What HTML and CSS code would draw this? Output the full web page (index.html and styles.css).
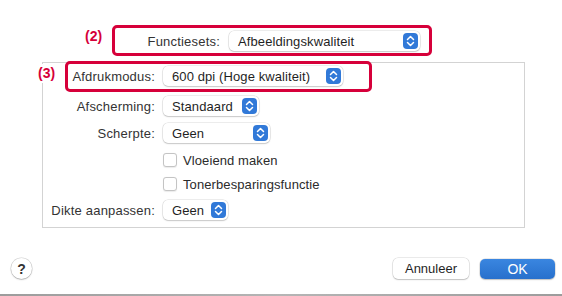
FILE: index.html
```html
<!DOCTYPE html>
<html lang="nl">
<head>
  <meta charset="UTF-8" />
  <title>Afdrukinstellingen</title>
  <link rel="stylesheet" href="styles.css">
</head>
<body>

  <div class="sheet">
    <div class="top">
      <div class="callout callout-two">
        <span class="mark mark-two">(2)</span>
        <span class="label top-label">Functiesets:</span>
        <div class="popup w-sets">
          <span>Afbeeldingskwaliteit</span>
          <svg class="stepper" viewBox="0 0 15 16"><rect width="15" height="16" rx="4"/><path d="M4.5 6.5 L7.5 3.5 L10.5 6.5 M4.5 9.5 L7.5 12.5 L10.5 9.5"/></svg>
        </div>
      </div>
    </div>

    <div class="panel">
      <div class="row row-mode callout callout-three">
        <span class="mark mark-three">(3)</span>
        <span class="label">Afdrukmodus:</span>
        <div class="popup w-mode">
          <span>600 dpi (Hoge kwaliteit)</span>
          <svg class="stepper" viewBox="0 0 15 16"><rect width="15" height="16" rx="4"/><path d="M4.5 6.5 L7.5 3.5 L10.5 6.5 M4.5 9.5 L7.5 12.5 L10.5 9.5"/></svg>
        </div>
      </div>

      <div class="row row-screen">
        <span class="label">Afscherming:</span>
        <div class="popup w-screen">
          <span>Standaard</span>
          <svg class="stepper" viewBox="0 0 15 16"><rect width="15" height="16" rx="4"/><path d="M4.5 6.5 L7.5 3.5 L10.5 6.5 M4.5 9.5 L7.5 12.5 L10.5 9.5"/></svg>
        </div>
      </div>

      <div class="row row-sharp">
        <span class="label">Scherpte:</span>
        <div class="popup w-sharp">
          <span>Geen</span>
          <svg class="stepper" viewBox="0 0 15 16"><rect width="15" height="16" rx="4"/><path d="M4.5 6.5 L7.5 3.5 L10.5 6.5 M4.5 9.5 L7.5 12.5 L10.5 9.5"/></svg>
        </div>
      </div>

      <label class="row row-check1">
        <span class="label"></span>
        <span class="checkbox"></span>
        <span class="check-text">Vloeiend maken</span>
      </label>

      <label class="row row-check2">
        <span class="label"></span>
        <span class="checkbox"></span>
        <span class="check-text">Tonerbesparingsfunctie</span>
      </label>

      <div class="row row-thick">
        <span class="label">Dikte aanpassen:</span>
        <div class="popup w-thick">
          <span>Geen</span>
          <svg class="stepper" viewBox="0 0 15 16"><rect width="15" height="16" rx="4"/><path d="M4.5 6.5 L7.5 3.5 L10.5 6.5 M4.5 9.5 L7.5 12.5 L10.5 9.5"/></svg>
        </div>
      </div>
    </div>

    <div class="footer">
      <button class="help">?</button>
      <div class="actions">
        <button class="btn">Annuleer</button>
        <button class="btn btn-ok">OK</button>
      </div>
    </div>
  </div>

  <div class="edge"></div>

</body>
</html>
```

FILE: styles.css
```css
body {
  margin: 0;
  width: 562px;
  height: 296px;
  overflow: hidden;
  background: #ffffff;
  font-family: "Liberation Sans", Arial, sans-serif;
  font-size: 13px;
  color: #2b2b2b;
}

.sheet {
  height: 294px;
  padding-top: 31px;
  box-sizing: border-box;
}

/* top row: Functiesets */
.top {
  display: flex;
  padding-left: 120px;
}

.callout {
  position: relative;
}

.callout::before {
  content: "";
  position: absolute;
  border: 3px solid #d6003a;
  border-radius: 5px;
  pointer-events: none;
}

.callout-two {
  display: flex;
  align-items: center;
  height: 20px;
}

.callout-two::before {
  top: -6px;
  bottom: -5px;
  left: -8px;
  right: -12px;
}

.callout-three::before {
  top: -5px;
  bottom: -6px;
  left: 22px;
  right: -29px;
}

.mark {
  position: absolute;
  font-weight: bold;
  font-size: 14px;
  line-height: 16px;
  color: #d6003a;
  background: #ffffff;
}

.mark-two {
  left: -35px;
  top: -3px;
}

.mark-three {
  left: -5px;
  top: -2px;
  padding: 1px 0 2px;
}

.top-label {
  width: 100px;
  margin-right: 9px;
}

.label {
  text-align: right;
  color: #333333;
  white-space: nowrap;
  letter-spacing: 0.2px;
}

/* settings panel */
.panel {
  margin: 11px 0 0 42px;
  width: 481px;
  height: 161px;
  border: 1px solid #d3d3d3;
  padding-top: 3px;
  box-sizing: content-box;
  display: flex;
  flex-direction: column;
  align-items: flex-start;
}

.panel .label {
  width: 112px;
  margin-right: 8px;
}

.row {
  display: flex;
  align-items: center;
  height: 20px;
}

.row-screen { margin-top: 10px; }
.row-sharp { margin-top: 7px; }
.row-check1 { margin-top: 7px; }
.row-check2 { margin-top: 4px; }
.row-thick { margin-top: 6px; }

/* popup buttons */
.popup {
  display: flex;
  align-items: center;
  justify-content: space-between;
  height: 20px;
  padding: 0 2px 0 9px;
  box-sizing: border-box;
  background: #ffffff;
  border-radius: 5px;
  box-shadow: 0 0 0 0.5px rgba(0, 0, 0, 0.14), 0 1px 1.5px rgba(0, 0, 0, 0.16);
  color: #1f1f1f;
  white-space: nowrap;
  letter-spacing: 0.1px;
}

.w-sets { width: 191px; }
.w-mode { width: 180px; }
.w-screen { width: 96px; }
.w-sharp { width: 107px; }
.w-thick { width: 65px; }

.stepper {
  width: 15px;
  height: 16px;
  flex: none;
}

.stepper rect {
  fill: #3179d8;
}

.stepper path {
  fill: none;
  stroke: #ffffff;
  stroke-width: 1.5;
  stroke-linecap: round;
  stroke-linejoin: round;
}

/* checkboxes */
.checkbox {
  width: 14px;
  height: 14px;
  box-sizing: border-box;
  border: 1px solid #c4c4c4;
  border-radius: 3px;
  background: #ffffff;
  box-shadow: 0 0.5px 1px rgba(0, 0, 0, 0.08);
  margin-right: 6px;
}

.check-text {
  color: #2b2b2b;
  letter-spacing: 0.1px;
}

/* footer */
.footer {
  display: flex;
  justify-content: space-between;
  align-items: center;
  margin-top: 30px;
  padding: 0 7px 0 11px;
}

.help {
  width: 21px;
  height: 21px;
  border-radius: 50%;
  border: none;
  padding: 0;
  background: #ffffff;
  box-shadow: 0 0 0 0.5px rgba(0, 0, 0, 0.18), 0 1px 1.5px rgba(0, 0, 0, 0.2);
  font-family: "Liberation Sans", Arial, sans-serif;
  font-size: 14px;
  font-weight: bold;
  color: #333333;
}

.actions {
  display: flex;
  align-items: center;
  gap: 11px;
}

.btn {
  width: 76px;
  height: 21px;
  border: none;
  border-radius: 5px;
  padding: 0;
  background: #ffffff;
  box-shadow: 0 0 0 0.5px rgba(0, 0, 0, 0.16), 0 1px 1.5px rgba(0, 0, 0, 0.18);
  font-family: "Liberation Sans", Arial, sans-serif;
  font-size: 13px;
  color: #1f1f1f;
}

.btn-ok {
  width: 75px;
  height: 20px;
  background: linear-gradient(#3a86e0, #2870cc);
  color: #ffffff;
  font-size: 14px;
}

.edge {
  height: 2px;
  background: linear-gradient(90deg, #9c9c9c, #b5b5b5 50%, #9c9c9c);
}
```
